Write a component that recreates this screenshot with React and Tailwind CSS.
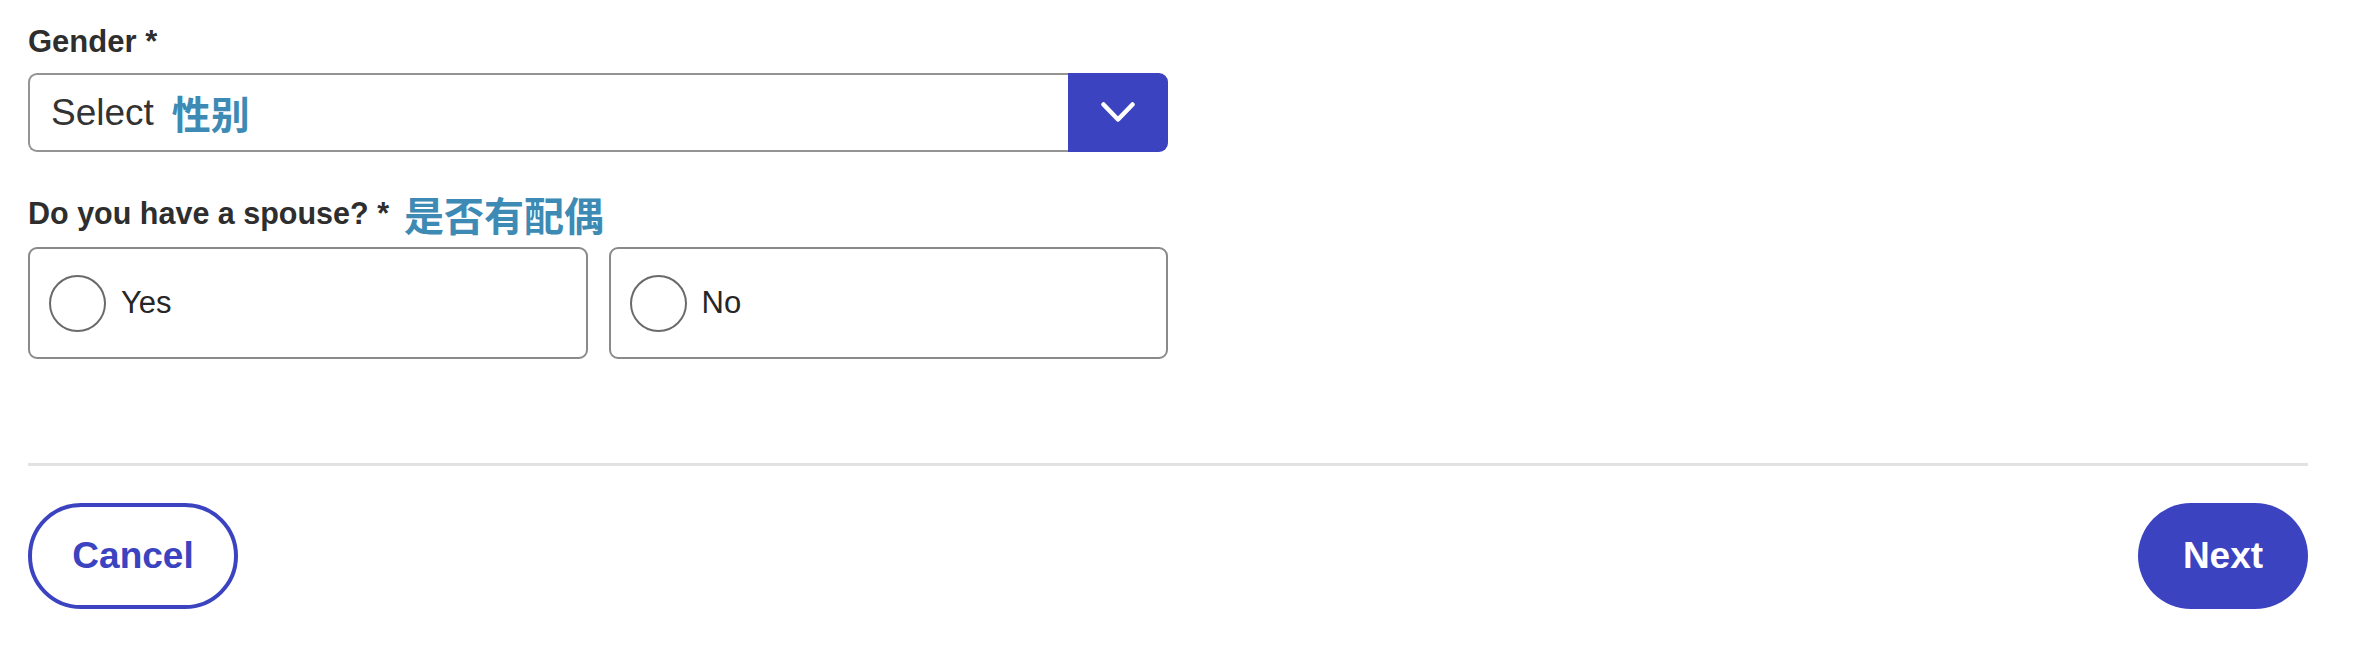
export default function App() {
  return (
    <div
      className="w-[2354px] h-[652px] bg-white pl-[28px] pr-[46px] pt-[22px] font-['Liberation_Sans','Noto_Sans_CJK_SC',sans-serif]"
    >
      <div className="h-[40px] flex items-center text-[31px] font-bold text-[#2e2e2e]">
        Gender *
      </div>

      <div className="mt-[11px] w-[1140px] h-[79px] flex">
        <div className="flex-1 flex items-center border-2 border-r-0 border-[#949494] rounded-l-[9px] pl-[21px] bg-white">
          <span className="text-[37px] text-[#333333]">Select</span>
          <span className="ml-[18px] text-[39px] font-semibold text-[#3d8bb5] font-['Noto_Sans_CJK_SC',sans-serif]">
            性别
          </span>
        </div>
        <div className="w-[100px] h-full bg-[#3b43c0] rounded-r-[9px] flex items-center justify-center">
          <svg width="34" height="21" viewBox="0 0 34 21" fill="none">
            <path
              d="M2.5 2.5 L17 17.5 L31.5 2.5"
              stroke="white"
              strokeWidth="4.5"
              strokeLinecap="round"
              strokeLinejoin="round"
            />
          </svg>
        </div>
      </div>

      <div className="mt-[42px] h-[40px] flex items-center">
        <span className="text-[30.5px] font-bold text-[#2e2e2e]">Do you have a spouse? *</span>
        <span className="ml-[15px] text-[40px] font-bold text-[#3d8bb5] font-['Noto_Sans_CJK_SC',sans-serif]">
          是否有配偶
        </span>
      </div>

      <div className="mt-[13px] w-[1140px] grid grid-cols-2 gap-[21px]">
        {["Yes", "No"].map((label) => (
          <div
            key={label}
            className="h-[112px] border-2 border-[#8a8a8a] rounded-[9px] flex items-center pl-[19px] bg-white"
          >
            <div className="w-[57px] h-[57px] rounded-full border-2 border-[#6a6a6a] bg-white" />
            <span className="ml-[15px] text-[31px] text-[#262626]">{label}</span>
          </div>
        ))}
      </div>

      <div className="mt-[104px] h-[3px] bg-[#e2e2e2]" />

      <div className="mt-[37px] flex justify-between items-center">
        <button className="w-[210px] h-[106px] rounded-full border-[4px] border-[#3b43c0] bg-white text-[#3b43c0] text-[37px] font-bold">
          Cancel
        </button>
        <button className="w-[170px] h-[106px] rounded-full bg-[#3b43c0] text-white text-[37px] font-bold">
          Next
        </button>
      </div>
    </div>
  );
}
